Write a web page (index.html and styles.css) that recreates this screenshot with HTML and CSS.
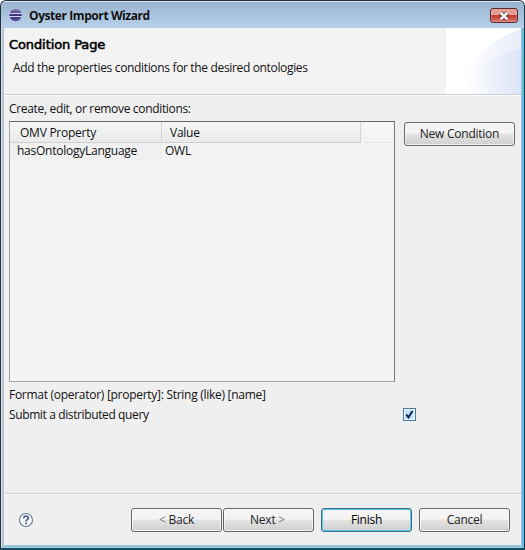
FILE: index.html
```html
<!DOCTYPE html>
<html lang="en">
<head>
<meta charset="utf-8">
<title>Oyster Import Wizard</title>
<link rel="stylesheet" href="styles.css">
</head>
<body>
<div class="window">
  <header class="titlebar">
    <svg class="logo" width="14" height="14" viewBox="0 0 14 14">
      <defs><linearGradient id="ball" x2="0" y2="1"><stop offset="0" stop-color="#8d83bd"/><stop offset=".5" stop-color="#39306f"/><stop offset="1" stop-color="#5550a0"/></linearGradient></defs>
      <circle cx="6.5" cy="7" r="6.2" fill="#c9c5e6"/>
      <circle cx="7.5" cy="7" r="6.2" fill="url(#ball)"/>
      <path d="M1 5.5h13M1 8.5h13" stroke="#d5d9f3" stroke-width="1"/>
    </svg>
    <h1 class="title">Oyster Import Wizard</h1>
    <button class="close" aria-label="Close"><svg width="12" height="10" viewBox="0 0 12 10"><path d="M2.6 1.8l6.8 6.4M9.4 1.8L2.6 8.2" stroke="#642c31" stroke-width="4"/><path d="M2.6 1.6l6.8 6.8M9.4 1.6L2.6 8.4" stroke="#fff" stroke-width="2.6"/></svg></button>
  </header>
  <section class="banner">
    <div class="heading">
      <h2 class="page-title">Condition Page</h2>
      <p class="description">Add the properties conditions for the desired ontologies</p>
    </div>
    <svg class="art" width="75" height="66" viewBox="0 0 75 66">
      <defs>
        <linearGradient id="a"><stop offset=".2" stop-color="#fff"/><stop offset="1" stop-color="#e8edfa"/></linearGradient>
        <linearGradient id="b"><stop offset=".2" stop-color="#fff"/><stop offset="1" stop-color="#dce4f7"/></linearGradient>
      </defs>
      <path fill="#fff" d="M0 0h75v66H0z"/>
      <path fill="url(#a)" d="M5 66C18 38 39 14 75 1v65z"/>
      <path fill="url(#b)" d="M5 66C21 43 44 27 75 21v45z"/>
    </svg>
  </section>
  <main class="content">
    <p class="label create">Create, edit, or remove conditions:</p>
    <div class="editor">
      <div class="table">
        <div class="row head"><span class="cell property">OMV Property</span><span class="cell value">Value</span><span class="cell"></span></div>
        <div class="row"><span class="cell name">hasOntologyLanguage</span><span class="cell value">OWL</span><span class="cell"></span></div>
        <div class="row empty"><span class="cell"></span><span class="cell"></span><span class="cell"></span></div>
      </div>
      <button class="button new">New Condition</button>
    </div>
    <p class="label format">Format (operator) [property]: String (like) [name]</p>
    <div class="query">
      <span class="label submit">Submit a distributed query</span>
      <span class="checkbox" role="checkbox" aria-checked="true" aria-label="Submit a distributed query"><svg width="9" height="9" viewBox="0 0 9 9"><path d="M1.3 4.5L3.4 7.4 7.5 1" fill="none" stroke="#14245c" stroke-width="2"/></svg></span>
    </div>
  </main>
  <footer class="footer">
    <svg class="help" width="16" height="16" viewBox="0 0 16 16"><circle cx="8" cy="8" r="6.5" fill="#f8fafc" stroke="#66799a" stroke-width="1.1"/><path d="M5.7 6.2C5.7 3.4 10.3 3.6 10.3 6.2 10.3 7.7 8 7.6 8 9.4M8 10.5v1.7" fill="none" stroke="#3d5588" stroke-width="1.6"/></svg>
    <div class="steps"><button class="button back"><span class="arrow">&lt;</span> Back</button><button class="button next">Next <span class="arrow">&gt;</span></button></div>
    <button class="button finish">Finish</button>
    <button class="button cancel">Cancel</button>
  </footer>
</div>
</body>
</html>
```
FILE: styles.css
```css
* { box-sizing: border-box; }
body { margin: 0; background: #fff; overflow: hidden; font: 12px/16px "Open Sans", "Noto Sans", sans-serif; color: #111; }
h1, h2, p { margin: 0; white-space: nowrap; }
.window { width: 525px; height: 550px; display: flex; flex-direction: column; padding: 1px 3px 3px; border: 1px solid #25303e; border-right-color: #12394c; border-bottom: 2px solid #164b62; border-radius: 6px 6px 0 0; background: linear-gradient(90deg, #dce5ea 0 1px, #b5c6d1 1px 3px, #98c7dd 3px calc(100% - 2px), #65bce0 calc(100% - 2px)); box-shadow: inset 0 1px #e3ebf3; }
.titlebar { height: 26px; flex: none; display: flex; align-items: center; margin: 0 -3px; padding: 0 6px 0 7px; background: linear-gradient(#99b4d1, #b9d1ea); border-radius: 5px 5px 0 0; }
.logo { margin-right: 7px; }
.title { flex: 1; padding-top: 1px; font: bold 12px/16px "Open Sans", sans-serif; letter-spacing: -.42px; }
.close { width: 28px; height: 15px; margin-top: 1px; padding: 0; display: flex; align-items: center; justify-content: center; border: 1px solid #59272d; border-radius: 3px; background: linear-gradient(#e5a093 0 45%, #c3382e 50%, #d97869); box-shadow: inset 0 0 0 1px #edb6aa66; }
.banner { height: 66px; flex: none; display: flex; justify-content: space-between; background: #f3f3f3; }
.heading { padding: 8px 0 0 5px; }
.page-title { font: 13px/17px "DejaVu Sans", sans-serif; letter-spacing: -.1px; color: #000; -webkit-text-stroke: .55px #000; }
.description { padding: 7px 0 0 4px; letter-spacing: -.34px; }
.art { flex: none; }
.content { flex: 1; padding: 6px 6px 0 5px; background: #efefef; border-top: 1px solid #d0d0d0; box-shadow: inset 0 1px #fafafa; }
.label { white-space: nowrap; letter-spacing: -.33px; }
.editor { display: flex; align-items: flex-start; justify-content: space-between; margin-top: 4px; }
.table { width: 386px; height: 261px; display: flex; flex-direction: column; border: 1px solid #a4a4a4; border-top-color: #686868; border-right-color: #777; background: #f4f4f4; }
.row { height: 17px; display: grid; grid-template-columns: 152px 199px 1fr; line-height: 16px; }
.cell { border-right: 1px solid #f0f0f0; padding-left: 3px; letter-spacing: -.25px; }
.name { padding-left: 7px; background: #f0f0f0; }
.head { height: 21px; grid-template-rows: 21px; line-height: 22px; }
.head .cell { padding-left: 10px; background: linear-gradient(#f6f6f6, #e8eaeb); border-right-color: #d5d5d5; border-bottom: 1px solid #d0d0d0; }
.head .value { padding-left: 8px; }
.head .cell:last-child { margin: 0 2px 0 3px; background: linear-gradient(#f9f9f9, #f3f3f3); border-right: 0; border-bottom-color: #e4e4e4; }
.row .cell:last-child { border-right: 0; }
.empty { flex: 1; }
.button { width: 91px; height: 24px; padding: 0; border: 1px solid #666; border-radius: 3px; background: linear-gradient(#f4f4f4 0 45%, #e3e3e3 52%, #cfcfcf); box-shadow: inset 0 0 0 1px #fafafacc; font: inherit; letter-spacing: -.25px; color: #222; white-space: nowrap; }
.new { width: 111px; margin-top: 1px; }
.format { margin-top: 5px; letter-spacing: -.28px; }
.query { display: flex; align-items: center; margin-top: 4px; }
.submit { width: 394px; letter-spacing: -.38px; }
.checkbox { width: 13px; height: 13px; margin-top: -2px; display: grid; place-items: center; border: 1px solid #477aa0; background: #c5e3f8; box-shadow: inset 0 0 0 1px #eef8fd; }
.footer { height: 52px; flex: none; display: flex; align-items: center; padding: 0 11px 0 14px; background: #efefef; border-top: 1px solid #d0d0d0; box-shadow: inset 0 1px #fafafa; }
.steps { display: flex; gap: 1px; margin-left: auto; }
.arrow { color: #777; }
.next { padding-right: 2px; }
.finish { margin-left: 7px; border-color: #3c6d87; box-shadow: inset 0 0 0 1px #52cbed; color: #000; }
.cancel { margin-left: 7px; }
```
